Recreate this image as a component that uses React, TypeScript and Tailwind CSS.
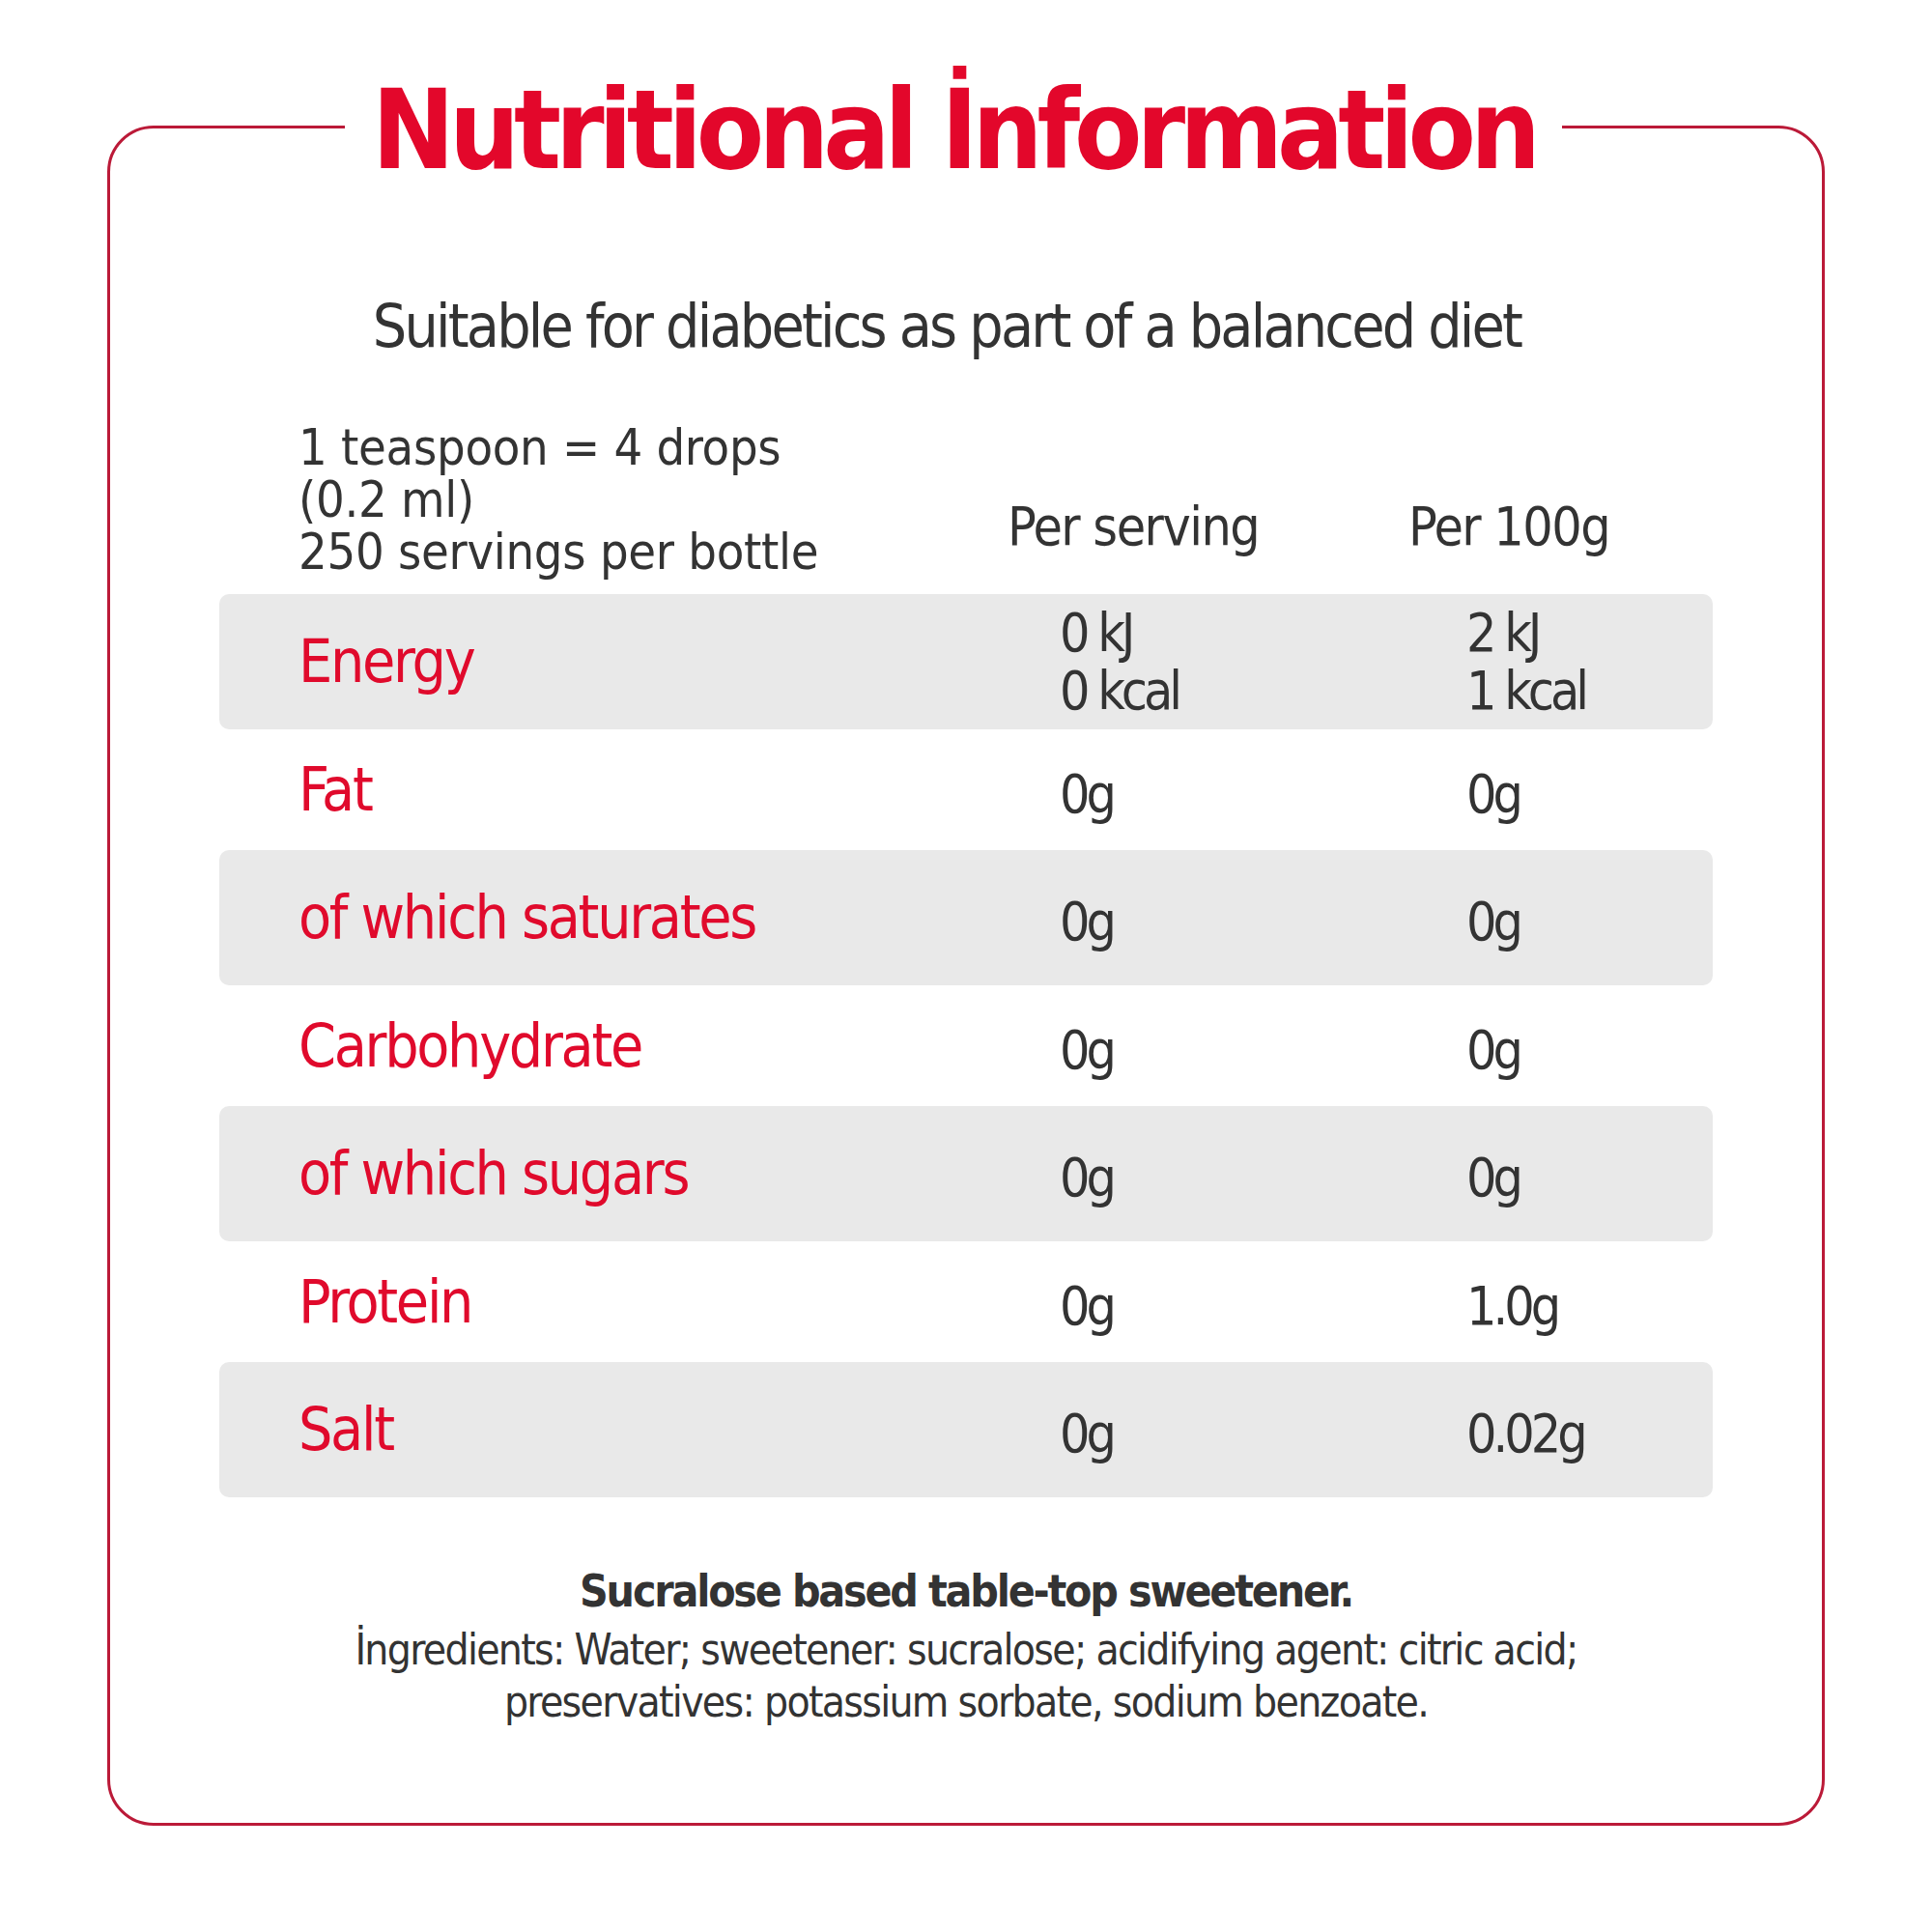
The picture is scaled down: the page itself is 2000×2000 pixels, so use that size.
const FONT = "font-['Liberation_Sans_Narrow','DejaVu_Sans_Condensed','Liberation_Sans',sans-serif]";

type Row = {
  label: string;
  serving: string[];
  per100: string[];
  shaded: boolean;
};

const ROWS: Row[] = [
  { label: 'Energy', serving: ['0 kJ', '0 kcal'], per100: ['2 kJ', '1 kcal'], shaded: true },
  { label: 'Fat', serving: ['0g'], per100: ['0g'], shaded: false },
  { label: 'of which saturates', serving: ['0g'], per100: ['0g'], shaded: true },
  { label: 'Carbohydrate', serving: ['0g'], per100: ['0g'], shaded: false },
  { label: 'of which sugars', serving: ['0g'], per100: ['0g'], shaded: true },
  { label: 'Protein', serving: ['0g'], per100: ['1.0g'], shaded: false },
  { label: 'Salt', serving: ['0g'], per100: ['0.02g'], shaded: true },
];

function Values({ lines, pad }: { lines: string[]; pad: string }) {
  return (
    <div
      className={`flex flex-col text-[55px] tracking-[-4px] ${pad} ${
        lines.length > 1 ? 'leading-[60px]' : 'leading-[56px] pt-[8px]'
      }`}
    >
      {lines.map((l) => (
        <span key={l}>{l}</span>
      ))}
    </div>
  );
}

export default function App() {
  return (
    <div className={`h-[2000px] w-[2000px] bg-white pl-[111px] pt-[130px] text-[#333333] ${FONT}`}>
      <div className="flex h-[1760px] w-[1778px] flex-col rounded-[48px] border-[3px] border-[#bb1a38]">
        {/* title sits on the top edge of the frame */}
        <div className="-mt-[55px] flex justify-center pr-[26px]">
          <h1 className="bg-white px-[28px] text-[114px] font-bold leading-[114px] tracking-[-6px] text-[#e3072b]">
            Nutritional İnformation
          </h1>
        </div>

        <p className="mt-[115px] pr-[40px] text-center text-[62px] leading-[62px] tracking-[-2.8px]">
          Suitable for diabetics as part of a balanced diet
        </p>

        <div className="mx-[113px] mt-[67px] flex flex-col">
          <div className="mb-[17px] grid grid-cols-[816px_415px_1fr] items-end">
            <div className="pl-[82px] text-[52px] leading-[54px] tracking-[-0.3px]">
              <div>1 teaspoon = 4 drops</div>
              <div>(0.2 ml)</div>
              <div>250 servings per bottle</div>
            </div>
            <div className="mb-[26px] text-[55px] leading-[54px] tracking-[-1.5px]">Per serving</div>
            <div className="mb-[26px] text-[55px] leading-[54px] tracking-[-1.5px]">Per 100g</div>
          </div>

          {ROWS.map((r) => (
            <div
              key={r.label}
              className={`grid grid-cols-[816px_415px_1fr] items-center rounded-[10px] ${
                r.shaded ? 'h-[140px] bg-[#e9e9e9]' : 'h-[125px]'
              }`}
            >
              <div className="pl-[82px] text-[62px] leading-[62px] tracking-[-2.3px] text-[#e00a2c]">
                {r.label}
              </div>
              <Values lines={r.serving} pad="pl-[54px]" />
              <Values lines={r.per100} pad="pl-[60px]" />
            </div>
          ))}
        </div>

        <div className="mt-[70px] text-center">
          <p className="text-[46px] font-bold leading-[54px] tracking-[-2.2px]">
            Sucralose based table-top sweetener.
          </p>
          <p className="mt-[7px] text-[44px] leading-[54px] tracking-[-1.7px]">
            İngredients: Water; sweetener: sucralose; acidifying agent: citric acid;
            <br />
            preservatives: potassium sorbate, sodium benzoate.
          </p>
        </div>
      </div>
    </div>
  );
}
